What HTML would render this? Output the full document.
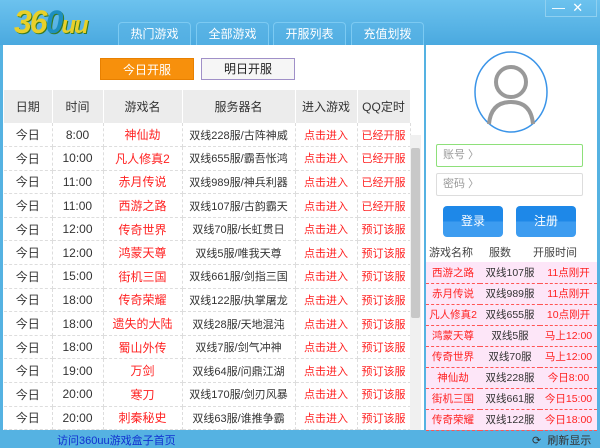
<!DOCTYPE html>
<html><head><meta charset="utf-8"><style>
*{margin:0;padding:0;box-sizing:border-box}
body{width:600px;height:447px;overflow:hidden;background:#55b2e2;font-family:"Liberation Sans","Noto Sans CJK SC",sans-serif;font-size:11px;position:relative}
.abs{position:absolute}
.hdr{left:0;top:0;width:600px;height:45px;background:linear-gradient(#6cc2ee,#4aa9df)}
.tab{top:22px;height:23px;width:73px;border:1px solid #7ccaf2;border-bottom:none;border-radius:4px 4px 0 0;color:#fff;font-size:12px;text-align:center;line-height:22px;background:rgba(90,180,230,.5)}
.left{left:3px;top:45px;width:421px;height:385px;background:#fff}
.right{left:426px;top:45px;width:171px;height:385px;background:#fff}
table{border-collapse:collapse;position:absolute;left:1px;top:45px;width:406px;table-layout:fixed}
td,th{text-align:center;height:23.6px;border-right:1px dashed #ddd;border-bottom:1px dashed #ddd;font-weight:normal;font-size:12px;color:#333}
th{background:#ececec;height:33px;border-right:1px solid #fff;border-bottom:none}
.r{color:#f22}
.s{font-size:11px}
.rl td{height:21px;border:none;border-bottom:1px dashed #f55;font-size:10.5px;background:#fde6f8;white-space:nowrap}
</style></head><body>
<div class="abs hdr"></div>
<div class="abs" style="left:14px;top:4px;font-size:32px;font-weight:bold;font-style:italic;color:#e8d02a;text-shadow:1px 1px 0 #3a7a20;letter-spacing:-2px">36<span style="color:#1d8fc0">0</span><span style="font-size:24px">uu</span></div>
<div class="abs tab" style="left:118px">热门游戏</div>
<div class="abs tab" style="left:196px">全部游戏</div>
<div class="abs tab" style="left:273px">开服列表</div>
<div class="abs tab" style="left:351px">充值划拨</div>
<div class="abs" style="left:545px;top:0;width:52px;height:17px;border:1px solid #8fd0f0;border-top:none;color:#fff;font-size:13px;line-height:15px;padding-left:6px">—&nbsp;&nbsp;✕</div>
<div class="abs left">
<div class="abs" style="left:97px;top:13px;width:94px;height:22px;background:#f7900c;color:#fff;font-size:12px;text-align:center;line-height:22px;border:1px solid #e88000">今日开服</div>
<div class="abs" style="left:198px;top:13px;width:94px;height:22px;background:#f6f6f6;color:#222;font-size:12px;text-align:center;line-height:20px;border:1px solid #a090c8">明日开服</div>
<table>
<colgroup><col style="width:48px"><col style="width:51px"><col style="width:79px"><col style="width:113px"><col style="width:62px"><col style="width:53px"></colgroup>
<tr><th>日期</th><th>时间</th><th>游戏名</th><th>服务器名</th><th>进入游戏</th><th>QQ定时</th></tr>
<tr><td>今日</td><td>8:00</td><td class="r">神仙劫</td><td class="s">双线228服/古阵神威</td><td class="r s">点击进入</td><td class="r s">已经开服</td></tr>
<tr><td>今日</td><td>10:00</td><td class="r">凡人修真2</td><td class="s">双线655服/霸吾怅鸿</td><td class="r s">点击进入</td><td class="r s">已经开服</td></tr>
<tr><td>今日</td><td>11:00</td><td class="r">赤月传说</td><td class="s">双线989服/神兵利器</td><td class="r s">点击进入</td><td class="r s">已经开服</td></tr>
<tr><td>今日</td><td>11:00</td><td class="r">西游之路</td><td class="s">双线107服/古韵霸天</td><td class="r s">点击进入</td><td class="r s">已经开服</td></tr>
<tr><td>今日</td><td>12:00</td><td class="r">传奇世界</td><td class="s">双线70服/长虹贯日</td><td class="r s">点击进入</td><td class="r s">预订该服</td></tr>
<tr><td>今日</td><td>12:00</td><td class="r">鸿蒙天尊</td><td class="s">双线5服/唯我天尊</td><td class="r s">点击进入</td><td class="r s">预订该服</td></tr>
<tr><td>今日</td><td>15:00</td><td class="r">街机三国</td><td class="s">双线661服/剑指三国</td><td class="r s">点击进入</td><td class="r s">预订该服</td></tr>
<tr><td>今日</td><td>18:00</td><td class="r">传奇荣耀</td><td class="s">双线122服/执掌屠龙</td><td class="r s">点击进入</td><td class="r s">预订该服</td></tr>
<tr><td>今日</td><td>18:00</td><td class="r">遗失的大陆</td><td class="s">双线28服/天地混沌</td><td class="r s">点击进入</td><td class="r s">预订该服</td></tr>
<tr><td>今日</td><td>18:00</td><td class="r">蜀山外传</td><td class="s">双线7服/剑气冲神</td><td class="r s">点击进入</td><td class="r s">预订该服</td></tr>
<tr><td>今日</td><td>19:00</td><td class="r">万剑</td><td class="s">双线64服/问鼎江湖</td><td class="r s">点击进入</td><td class="r s">预订该服</td></tr>
<tr><td>今日</td><td>20:00</td><td class="r">寒刀</td><td class="s">双线170服/剑刃风暴</td><td class="r s">点击进入</td><td class="r s">预订该服</td></tr>
<tr><td>今日</td><td>20:00</td><td class="r">刺秦秘史</td><td class="s">双线63服/谁推争霸</td><td class="r s">点击进入</td><td class="r s">预订该服</td></tr>
</table>
<div class="abs" style="left:407px;top:90px;width:11px;height:295px;background:#f0f0f0"></div>
<div class="abs" style="left:408px;top:103px;width:9px;height:170px;background:#c8c8c8;border-radius:2px"></div>
</div>
<div class="abs right">
<svg class="abs" style="left:47px;top:5px" width="76" height="84"><ellipse cx="38" cy="42" rx="36" ry="40" fill="#fff" stroke="#3a94e8" stroke-width="1.5"/><circle cx="38" cy="32" r="15" fill="none" stroke="#999" stroke-width="4"/><path d="M16 74 Q18 52 38 52 Q58 52 60 74" fill="none" stroke="#999" stroke-width="4"/></svg>
<div class="abs" style="left:10px;top:99px;width:147px;height:23px;border:1px solid #8ee07a;border-radius:2px;color:#999;line-height:21px;padding-left:6px">账号 〉</div>
<div class="abs" style="left:10px;top:128px;width:147px;height:23px;border:1px solid #ddd;border-radius:2px;color:#999;line-height:21px;padding-left:6px">密码 〉</div>
<div class="abs" style="left:17px;top:161px;width:60px;height:31px;background:linear-gradient(#1e88e8 50%,#3d9cf0 50%);border-radius:4px;color:#fff;font-size:12px;text-align:center;line-height:31px">登录</div>
<div class="abs" style="left:90px;top:161px;width:60px;height:31px;background:linear-gradient(#1e88e8 50%,#3d9cf0 50%);border-radius:4px;color:#fff;font-size:12px;text-align:center;line-height:31px">注册</div>
<div class="abs" style="left:3px;top:199px;width:170px;color:#444;font-size:11px"><span class="abs" style="left:0">游戏名称</span><span class="abs" style="left:60px">服数</span><span class="abs" style="left:104px">开服时间</span></div>
<table class="rl" style="left:0;top:217px;width:171px"><colgroup><col style="width:54px"><col style="width:60px"><col></colgroup>
<tr><td class="r">西游之路</td><td>双线107服</td><td class="r">11点刚开</td></tr>
<tr><td class="r">赤月传说</td><td>双线989服</td><td class="r">11点刚开</td></tr>
<tr><td class="r">凡人修真2</td><td>双线655服</td><td class="r">10点刚开</td></tr>
<tr><td class="r">鸿蒙天尊</td><td>双线5服</td><td class="r">马上12:00</td></tr>
<tr><td class="r">传奇世界</td><td>双线70服</td><td class="r">马上12:00</td></tr>
<tr><td class="r">神仙劫</td><td>双线228服</td><td class="r">今日8:00</td></tr>
<tr><td class="r">街机三国</td><td>双线661服</td><td class="r">今日15:00</td></tr>
<tr><td class="r">传奇荣耀</td><td>双线122服</td><td class="r">今日18:00</td></tr>
</table>
</div>
<div class="abs" style="left:57px;top:432px;color:#1030d0;font-size:11px">访问360uu游戏盒子首页</div>
<div class="abs" style="left:532px;top:432px;color:#333;font-size:11px">⟳&nbsp; 刷新显示</div>
</body></html>
